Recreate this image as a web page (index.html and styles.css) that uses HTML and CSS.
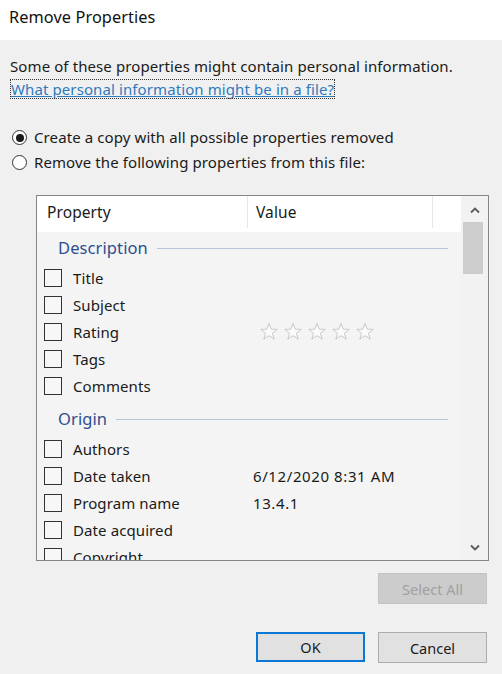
FILE: index.html
```html
<!DOCTYPE html>
<html lang="en">
<head>
<meta charset="utf-8">
<title>Remove Properties</title>
<link rel="stylesheet" href="styles.css">
</head>
<body>
<div class="dialog">
  <div class="titlebar">Remove Properties</div>
  <div class="content">
    <p class="intro">Some of these properties might contain personal information.</p>
    <p class="linkline"><a class="link" href="#">What personal information might be in a file?</a></p>
    <div class="radios">
      <label class="radio"><span class="circle on"></span>Create a copy with all possible properties removed</label>
      <label class="radio"><span class="circle"></span>Remove the following properties from this file:</label>
    </div>
    <div class="listbox">
      <div class="listmain">
        <div class="lhead">
          <div class="hcell hprop">Property</div>
          <div class="hcell hval">Value</div>
        </div>
        <div class="group first"><span class="gname">Description</span><span class="gline"></span></div>
        <div class="row"><div class="pcell"><span class="cb"></span>Title</div><div class="vcell"></div></div>
        <div class="row"><div class="pcell"><span class="cb"></span>Subject</div><div class="vcell"></div></div>
        <div class="row"><div class="pcell"><span class="cb"></span>Rating</div><div class="vcell">
          <svg class="stars" width="124" height="20" viewBox="0 0 124 20">
            <g fill="#fafafa" stroke="#c9c9c9" stroke-width="1" stroke-linejoin="round">
              <polygon points="9,1.5 11.2,7.2 17.3,7.4 12.5,11.2 14.2,17.2 9,13.7 3.8,17.2 5.5,11.2 0.7,7.4 6.8,7.2"/>
              <polygon transform="translate(24 0)" points="9,1.5 11.2,7.2 17.3,7.4 12.5,11.2 14.2,17.2 9,13.7 3.8,17.2 5.5,11.2 0.7,7.4 6.8,7.2"/>
              <polygon transform="translate(48 0)" points="9,1.5 11.2,7.2 17.3,7.4 12.5,11.2 14.2,17.2 9,13.7 3.8,17.2 5.5,11.2 0.7,7.4 6.8,7.2"/>
              <polygon transform="translate(72 0)" points="9,1.5 11.2,7.2 17.3,7.4 12.5,11.2 14.2,17.2 9,13.7 3.8,17.2 5.5,11.2 0.7,7.4 6.8,7.2"/>
              <polygon transform="translate(96 0)" points="9,1.5 11.2,7.2 17.3,7.4 12.5,11.2 14.2,17.2 9,13.7 3.8,17.2 5.5,11.2 0.7,7.4 6.8,7.2"/>
            </g>
          </svg>
        </div></div>
        <div class="row"><div class="pcell"><span class="cb"></span>Tags</div><div class="vcell"></div></div>
        <div class="row"><div class="pcell"><span class="cb"></span>Comments</div><div class="vcell"></div></div>
        <div class="group"><span class="gname">Origin</span><span class="gline"></span></div>
        <div class="row"><div class="pcell"><span class="cb"></span>Authors</div><div class="vcell"></div></div>
        <div class="row"><div class="pcell"><span class="cb"></span>Date taken</div><div class="vcell">6/12/2020 8:31 AM</div></div>
        <div class="row"><div class="pcell"><span class="cb"></span>Program name</div><div class="vcell">13.4.1</div></div>
        <div class="row"><div class="pcell"><span class="cb"></span>Date acquired</div><div class="vcell"></div></div>
        <div class="row"><div class="pcell"><span class="cb"></span>Copyright</div><div class="vcell"></div></div>
      </div>
      <div class="scrollbar">
        <svg class="arrow" width="10" height="7" viewBox="0 0 10 7"><path d="M1 5.5 L5 1.5 L9 5.5" fill="none" stroke="#5a5a5a" stroke-width="1.8"/></svg>
        <div class="thumb"></div>
        <div class="track"></div>
        <svg class="arrow" width="10" height="7" viewBox="0 0 10 7"><path d="M1 1.5 L5 5.5 L9 1.5" fill="none" stroke="#5a5a5a" stroke-width="1.8"/></svg>
      </div>
    </div>
    <div class="selrow"><button class="btn disabled" type="button">Select All</button></div>
    <div class="btnrow">
      <button class="btn default" type="button">OK</button>
      <button class="btn" type="button">Cancel</button>
    </div>
  </div>
</div>
</body>
</html>
```

FILE: styles.css
```css
* { box-sizing: border-box; }
html, body { margin: 0; padding: 0; }
body {
  width: 502px;
  height: 674px;
  overflow: hidden;
  background: #f0f0f0;
  font-family: "Noto Sans", "Open Sans", sans-serif;
  font-size: 15px;
  letter-spacing: 0.1px;
  color: #1a1a1a;
}
.dialog { width: 502px; height: 674px; }
.titlebar {
  height: 40px;
  background: #ffffff;
  padding: 6px 0 0 9px;
  font-size: 16.3px;
  line-height: 23px;
  color: #111;
}
.content { padding: 15px 15px 0 10px; }
.intro, .linkline { margin: 0; line-height: 23px; }
.link {
  color: #2f7bbf;
  text-decoration: underline;
  outline: 1px dotted #333;
  outline-offset: -1px;
  padding: 0 1px;
}
.radios { margin-top: 24px; display: flex; flex-direction: column; }
.radio {
  display: flex;
  align-items: center;
  height: 25px;
  line-height: 25px;
}
.circle {
  width: 15px;
  height: 15px;
  border: 1px solid #333;
  border-radius: 50%;
  margin: 0 7px 0 2px;
  display: flex;
  align-items: center;
  justify-content: center;
  background: #fff;
}
.circle.on::after {
  content: "";
  width: 8px;
  height: 8px;
  border-radius: 50%;
  background: #1a1a1a;
}
.listbox {
  margin: 20px 0 0 26px;
  width: 453px;
  height: 366px;
  border: 1px solid #858585;
  display: flex;
  background: #f4f4f4;
  overflow: hidden;
}
.listmain { width: 424px; display: flex; flex-direction: column; }
.lhead {
  height: 36px;
  flex: none;
  background: #fff;
  display: flex;
  align-items: stretch;
}
.hcell { display: flex; align-items: center; line-height: 20px; font-size: 15.5px; }
.hprop { width: 211px; padding-left: 10px; border-right: 1px solid #e6e6e6; margin-bottom: 4px; }
.hval { width: 185px; padding-left: 8px; border-right: 1px solid #e6e6e6; margin-bottom: 4px; }
.group {
  height: 32px;
  flex: none;
  display: flex;
  align-items: center;
  padding: 0 13px 0 21px;
}
.group:not(.first) { margin-top: 4px; }
.gname { color: #2d4f8e; font-size: 16.5px; line-height: 20px; }
.gline { flex: 1; height: 1px; background: #b9c6da; margin-left: 9px; margin-top: 1px; }
.row {
  height: 27px;
  flex: none;
  display: flex;
  align-items: center;
}
.pcell {
  width: 211px;
  display: flex;
  align-items: center;
  padding-left: 7px;
}
.cb {
  width: 18px;
  height: 18px;
  border: 1px solid #333;
  background: #f7f7f7;
  margin-right: 11px;
  flex: none;
}
.vcell { padding-left: 5px; display: flex; align-items: center; letter-spacing: 0.6px; }
.stars { display: block; margin-left: 7px; }
.scrollbar {
  width: 27px;
  background: #f2f2f2;
  display: flex;
  flex-direction: column;
  align-items: center;
  padding: 11px 0 9px;
}
.arrow { display: block; flex: none; }
.thumb {
  width: 20px;
  height: 52px;
  background: #cdcdcd;
  margin-top: 8px;
  margin-right: 4px;
  flex: none;
}
.track { flex: 1; }
.selrow { display: flex; justify-content: flex-end; margin-top: 12px; }
.btnrow { display: flex; justify-content: flex-end; gap: 13px; margin-top: 28px; }
.btn {
  width: 109px;
  height: 31px;
  font-family: inherit;
  font-size: 14.5px;
  background: #e1e1e1;
  border: 1px solid #adadad;
  color: #1a1a1a;
  padding: 0;
}
.btn.disabled { background: #cccccc; border-color: #c4c4c4; color: #a0a0a0; }
.btn.default { border: 2px solid #0a78d4; height: 30px; }
```
